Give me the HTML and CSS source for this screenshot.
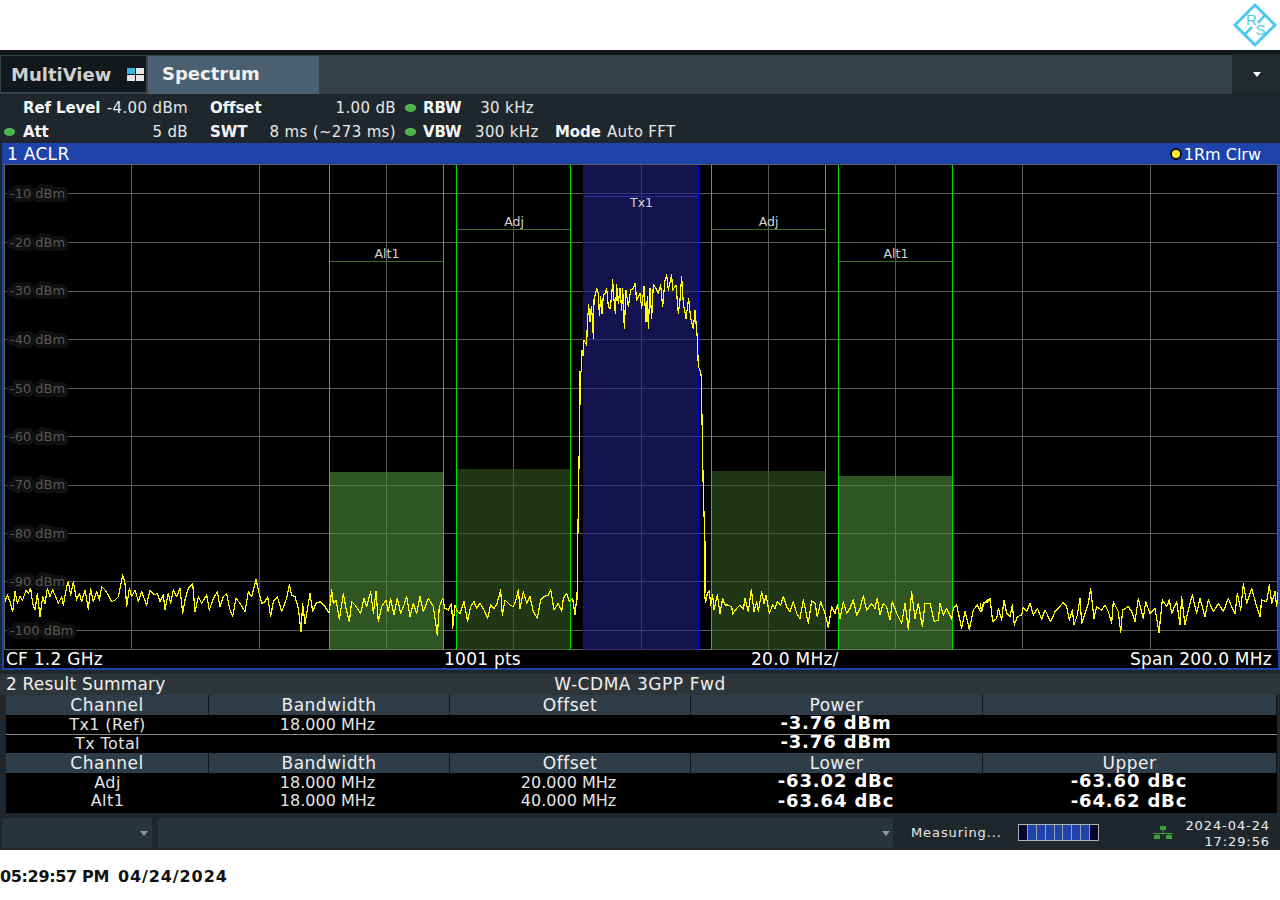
FILE: index.html
```html
<!DOCTYPE html>
<html lang="en">
<head>
<meta charset="utf-8">
<title>R&amp;S Spectrum ACLR</title>
<link rel="stylesheet" href="styles.css">
</head>
<body>
<header class="page-head">
  <svg class="logo" viewBox="0 0 46 46" width="46" height="46" aria-label="R&amp;S">
    <path class="logo-line" d="M23 3 L43 23 L23 43 L3 23 Z"/>
    <path class="logo-line thin" d="M34 12 L26 21 M20 25 L12 33"/>
    <text class="logo-text" x="14" y="23">R</text>
    <text class="logo-text" x="23.500" y="33">S</text>
  </svg>
</header>

<main class="instrument">
  <div class="top-strip"></div>
  <nav class="tabbar">
    <div class="tab tab-multi">
      <span>MultiView</span>
      <span class="mv-icon"><i class="on"></i><i></i><i></i><i></i></span>
    </div>
    <div class="tab tab-spectrum">Spectrum</div>
    <div class="tab-fill"></div>
    <div class="tab-menu"><span class="tri-white"></span></div>
  </nav>

  <section class="info">
    <span class="c-dot"></span>
    <b class="c-l1">Ref Level</b><span class="c-v1">-4.00 dBm</span>
    <b class="c-l2">Offset</b><span class="c-v2">1.00 dB</span>
    <span class="c-dot2"><i class="led"></i></span>
    <b class="c-l3">RBW</b><span class="c-v3">30 kHz</span>
    <span></span><span></span>

    <span class="c-dot"><i class="led"></i></span>
    <b class="c-l1">Att</b><span class="c-v1">5 dB</span>
    <b class="c-l2">SWT</b><span class="c-v2">8 ms (~273 ms)</span>
    <span class="c-dot2"><i class="led"></i></span>
    <b class="c-l3">VBW</b><span class="c-v3">300 kHz</span>
    <b class="c-l4">Mode</b><span class="c-v4">Auto FFT</span>
  </section>

  <section class="window">
    <div class="win-title">
      <span>1 ACLR</span>
      <span class="trace-tag"><i class="marker"></i>1Rm Clrw</span>
    </div>
    <svg class="plot" viewBox="4 164 1274 486" width="1274" height="486">
      <rect class="bg" x="4" y="164" width="1274" height="486"/>
      <g class="grid">
        <path d="M131.5 164V650M259.5 164V650M386.5 164V650M513.5 164V650M641.5 164V650M768.5 164V650M895.5 164V650M1022.5 164V650M1150.5 164V650M1277.5 164V650M4.5 164V650"/>
        <path d="M4 164.5H1278M4 193.5H1278M4 242.5H1278M4 291.5H1278M4 339.5H1278M4 388.5H1278M4 436.5H1278M4 485.5H1278M4 533.5H1278M4 581.5H1278M4 630.5H1278M4 649.5H1278"/>
      </g>
      <g class="ylabels">
        <text x="10" y="198">-10 dBm</text>
        <text x="10" y="247">-20 dBm</text>
        <text x="10" y="295">-30 dBm</text>
        <text x="10" y="344">-40 dBm</text>
        <text x="10" y="393">-50 dBm</text>
        <text x="10" y="441">-60 dBm</text>
        <text x="10" y="489">-70 dBm</text>
        <text x="10" y="538">-80 dBm</text>
        <text x="10" y="586">-90 dBm</text>
        <text x="10" y="635">-100 dBm</text>
      </g>
      <rect class="fill-tx" x="583" y="165" width="116" height="485"/>
      <rect class="fill-alt" x="329" y="472" width="114" height="178"/>
      <rect class="fill-adj" x="456" y="469" width="114" height="181"/>
      <rect class="fill-adj" x="711" y="471" width="114" height="179"/>
      <rect class="fill-alt" x="838" y="476" width="114" height="174"/>
      <path class="edge-blue" d="M583.5 165V650M698.5 165V650"/>
      <path class="edge-green" d="M329.5 165V650M443.5 165V650M456.5 165V650M570.5 165V650M711.5 165V650M825.5 165V650M838.5 165V650M952.5 165V650"/>
      <path class="bar-green" d="M330 261.5H443M457 229.5H570M712 229.5H825M839 261.5H952"/>
      <path class="bar-blue" d="M584 196.5H698"/>
      <g class="chlabels">
        <text x="387" y="258">Alt1</text>
        <text x="514" y="226">Adj</text>
        <text x="641.500" y="207">Tx1</text>
        <text x="768.500" y="226">Adj</text>
        <text x="896" y="258">Alt1</text>
      </g>
      <g transform="translate(0 560) scale(.33333)">
        <polyline class="trace" points="15,125 22,105 30,125 38,155 45,95 52,130 60,110 68,120 78,90 85,100 92,85 98,130 105,150 112,100 120,170 128,110 135,130 142,85 150,110 158,90 165,105 175,130 185,110 190,135 200,80 205,65 212,105 220,65 230,120 238,100 245,125 255,90 265,148 272,85 280,125 290,95 298,120 305,80 315,90 322,100 335,125 345,120 355,110 368,45 375,70 380,140 388,85 395,110 405,90 415,125 425,95 440,135 450,90 462,105 472,100 480,125 490,105 495,150 505,100 512,130 520,90 530,110 540,85 548,160 555,120 565,85 578,70 585,155 595,110 605,130 620,105 628,150 640,115 652,95 660,140 670,110 680,100 690,150 698,170 708,115 720,130 735,155 745,95 755,110 768,58 776,95 785,130 795,125 803,110 812,170 820,125 832,110 845,155 860,115 868,75 875,105 885,110 895,145 903,215 908,130 915,190 930,100 938,155 948,130 960,125 975,140 988,160"/>
      </g>
      <g transform="translate(300 570) scale(.33333)">
        <polyline class="trace" points="88,125 95,60 100,100 108,90 118,148 130,72 140,125 148,155 155,95 165,105 182,130 192,85 200,110 212,65 220,130 228,65 235,155 245,110 258,90 265,125 272,85 282,135 292,85 302,130 312,105 320,80 330,140 340,100 350,130 360,80 370,125 385,85 400,110 412,195 418,110 428,85 435,115 445,120 455,100 458,175 465,105 472,125 480,130 492,95 503,155 512,110 522,95 530,115 540,100 552,120 563,145 572,105 582,115 590,105 602,60 607,135 615,90 630,105 640,110 648,90 655,60 660,115 670,65 680,100 690,80 700,125 712,145 722,90 732,80 745,75 752,58 762,120 775,100 785,125 790,85 800,70 808,95 818,85 825,135 830,85"/>
      </g>
      <g transform="translate(570 260) scale(.33333)">
        <polyline class="trace" points="21,1020 24,800 30,420 30,335 35,335 36,270 40,285 42,240 50,255 52,190 56,135 60,185 64,140 68,185 70,235 72,120 80,85 85,100 88,165 92,110 96,160 100,105 105,100 110,85 115,140 120,145 125,110 128,60 132,120 136,160 140,75 145,130 150,85 155,150 158,85 163,205 168,90 175,140 182,90 190,85 195,70 200,120 210,100 215,145 222,80 228,185 232,110 235,205 240,85 245,175 250,75 258,85 265,100 272,75 278,140 285,60 290,45 295,90 305,45 308,90 318,75 325,160 330,120 335,50 340,130 348,175 356,115 362,175 370,205 375,150 382,235 385,320 390,330 395,355 395,420 400,700 405,850 405,1000"/>
      </g>
      <g transform="translate(690 570) scale(.33333)">
        <polyline class="trace" points="43,0 43,68 47,98 52,70 58,62 62,105 68,75 72,120 82,75 90,130 98,85 105,105 112,105 125,110 128,132 140,115 150,105 160,118 165,85 175,125 184,58 192,125 200,95 205,125 215,65 222,100 228,75 238,130 248,105 255,115 262,95 272,105 280,80 290,110 300,125 310,95 320,130 330,145 340,90 355,160 365,92 375,100 382,140 392,95 405,130 415,172 425,110 435,130 442,105 450,145 460,95 470,130 480,115 490,90 500,135 510,115 520,78 530,120 545,100 555,115 562,85 570,135 580,100 590,110 600,150 607,95 620,130 635,160 645,100 655,178 665,65 675,145 685,100 697,170 705,100 720,100 733,155 745,150 750,100 760,135 770,115 785,148 790,115 800,105 815,175 825,125 838,178 850,120 862,105 872,125 880,100 900,85"/>
      </g>
      <g transform="translate(980 570) scale(.33333)">
        <polyline class="trace" points="0,98 5,125 12,100 25,95 30,85 38,155 50,145 55,115 65,150 72,90 80,130 90,140 97,105 103,165 112,140 125,135 130,112 140,125 150,100 160,135 172,115 185,148 195,120 212,155 225,125 235,115 250,97 260,110 268,150 277,120 282,165 292,135 300,85 305,160 315,130 325,100 332,57 342,145 350,110 365,120 375,105 385,125 395,160 400,95 415,125 422,187 428,120 445,110 455,125 465,155 475,85 490,145 497,95 510,130 525,115 537,187 547,90 560,110 568,90 575,130 590,95 600,165 605,80 615,165 625,120 637,75 650,130 660,85 675,140 685,90 700,125 715,100 730,125 745,85 755,110 765,130 772,70 782,120 790,42 800,100 815,55 830,110 840,140 845,90 860,95 868,45 875,100 885,65 890,110 895,60"/>
      </g>
    </svg>
    <div class="plot-foot">
      <span>CF 1.2 GHz</span>
      <span>1001 pts</span>
      <span>20.0 MHz/</span>
      <span>Span 200.0 MHz</span>
    </div>
  </section>

  <section class="summary">
    <div class="sum-title">
      <span class="sum-name">2 Result Summary</span>
      <span class="sum-std">W-CDMA 3GPP Fwd</span>
    </div>
    <table class="results">
      <colgroup><col class="w1"><col class="w2"><col class="w2"><col class="w3"><col class="w4"></colgroup>
      <tr class="h20"><th>Channel</th><th>Bandwidth</th><th>Offset</th><th>Power</th><th></th></tr>
      <tr class="h19 ruled"><td>Tx1 (Ref)</td><td class="num">18.000 MHz</td><td></td><td class="val">-3.76 dBm</td><td></td></tr>
      <tr class="h18"><td>Tx Total</td><td></td><td></td><td class="val">-3.76 dBm</td><td></td></tr>
      <tr class="h20"><th>Channel</th><th>Bandwidth</th><th>Offset</th><th>Lower</th><th>Upper</th></tr>
      <tr class="h19"><td>Adj</td><td class="num">18.000 MHz</td><td class="num">20.000 MHz</td><td class="val">-63.02 dBc</td><td class="val">-63.60 dBc</td></tr>
      <tr class="h21"><td>Alt1</td><td class="num">18.000 MHz</td><td class="num">40.000 MHz</td><td class="val">-63.64 dBc</td><td class="val">-64.62 dBc</td></tr>
    </table>
  </section>

  <footer class="statusbar">
    <div class="drop drop-a"><span class="tri-gray"></span></div>
    <div class="drop drop-b"><span class="tri-gray"></span></div>
    <div class="measuring">Measuring...</div>
    <div class="progress"><i class="off"></i><i></i><i></i><i></i><i></i><i></i><i></i><i></i><i class="off"></i></div>
    <svg class="net" viewBox="0 0 20 14" width="20" height="14" aria-hidden="true">
      <rect x="7" y="0" width="6" height="4"/>
      <rect x="1" y="9" width="6" height="4"/>
      <rect x="13" y="9" width="6" height="4"/>
      <path d="M10 4V9M0 7.500H20M4 7V9M16 7V9"/>
    </svg>
    <div class="clock"><span>2024-04-24</span><span>17:29:56</span></div>
  </footer>
</main>

<p class="stamp"><span class="time">05:29:57 PM</span><span class="date">04/24/2024</span></p>
</body>
</html>
```

FILE: styles.css
```css
* { box-sizing: border-box; }
html, body { margin: 0; padding: 0; }
body { background: #fff; font-family: "DejaVu Sans", sans-serif; color: #fff; width: 1280px; }

.page-head { height: 50px; display: flex; justify-content: flex-end; align-items: flex-start; padding: 2px 2px 0 0; }
.logo-line { fill: none; stroke: #4cc9ec; stroke-width: 3; }
.logo-line.thin { stroke-width: 2.5; }
.logo-text { font-family: "Liberation Sans", sans-serif; font-size: 15px; fill: #4cc9ec; }

.instrument { height: 800px; background: #1f272d; display: flex; flex-direction: column; }
.top-strip { height: 5px; background: #111819; }

.tabbar { height: 39px; display: flex; background: #36424a; }
.tab { display: flex; align-items: center; font-weight: bold; font-size: 18px; }
.tab-multi { width: 145px; margin: 1px 2px 2px 1px; background: #12181b; color: #cfcfcf; padding-left: 10px; gap: 16px; }
.tab-spectrum { width: 171px; background: #4a5f70; color: #f0f0f0; padding-left: 14px; margin-top: 1px; padding-bottom: 3px; }
.tab-fill { flex: 1; }
.tab-menu { width: 48px; margin-top: -1px; background: #232a2e; display: flex; align-items: center; justify-content: center; }
.tri-white { width: 0; height: 0; border: 4px solid transparent; border-top: 5px solid #fff; border-bottom: 0; margin-left: 2px; }
.mv-icon { display: grid; grid-template-columns: 8px 8px; grid-template-rows: 6px 6px; gap: 1px; }
.mv-icon i { background: #e6e6e6; }
.mv-icon i.on { background: #3cb4e0; }

.info {
  height: 49px; padding: 2px 0 0 4px; display: grid; font-size: 15px; color: #e8e8e8; white-space: nowrap;
  grid-template-columns: 19px 82px 105px 55px 131px 27px 52px 80px 52px 1fr;
  grid-auto-rows: 24px; align-items: center;
}
.info span { letter-spacing: .35px; }
.info b { color: #f4f4f4; font-weight: bold; letter-spacing: -.1px; }
.c-v1 { text-align: right; padding-right: 22px; }
.c-v3 { text-align: right; padding-right: 21px; }
.c-v2 { text-align: right; }
.c-dot2 { display: flex; justify-content: center; padding-left: 2px; }
.led { display: block; width: 11px; height: 8px; border-radius: 50%; background: radial-gradient(ellipse at 50% 70%, #46b44a 45%, #8ccf8f 100%); }

.window { margin-left: 2px; height: 527px; border: solid #1e44ac; border-width: 0 2px 2px; display: flex; flex-direction: column; background: #000; flex: none; }
.win-title { height: 21px; margin-right: -2px; background: #1e44ac; display: flex; justify-content: space-between; align-items: center; font-size: 17px; letter-spacing: .3px; padding: 1px 19px 0 3px; color: #fff; }
.trace-tag { display: flex; align-items: center; gap: 2px; font-size: 16px; letter-spacing: 0; }
.marker { width: 12px; height: 12px; border-radius: 50%; background: #ffee33; border: 2px solid #101010; }

.plot { display: block; flex: none; }
.bg { fill: #000; }
.grid path { stroke: #5c5c5c; stroke-width: 1; fill: none; shape-rendering: crispEdges; }
.ylabels text { font-size: 13px; fill: #585858; paint-order: stroke; stroke: #101010; stroke-width: 8px; stroke-linejoin: round; }
.fill-tx { fill: #211e84; opacity: .6; shape-rendering: crispEdges; }
.fill-alt { fill: #4e8e3a; opacity: .6; shape-rendering: crispEdges; }
.fill-adj { fill: #345c23; opacity: .6; shape-rendering: crispEdges; }
.edge-blue { stroke: #0000e6; fill: none; shape-rendering: crispEdges; }
.edge-green { stroke: #00e000; fill: none; shape-rendering: crispEdges; }
.bar-green { stroke: #3c6e2c; fill: none; shape-rendering: crispEdges; }
.bar-blue { stroke: #2c2ca8; fill: none; shape-rendering: crispEdges; }
.chlabels text { font-size: 12.500px; fill: #d4d4d4; text-anchor: middle; }
.trace { fill: none; stroke: #ffff00; stroke-width: 1.200px; vector-effect: non-scaling-stroke; shape-rendering: crispEdges; stroke-linejoin: round; }

.plot-foot { height: 18px; display: grid; grid-template-columns: 438px 307px 1fr auto; padding: 0 6px 0 2px; font-size: 17px; letter-spacing: .25px; line-height: 18px; background: #000; color: #fff; }

.summary { height: 143px; padding: 4px 3px 0 6px; flex: none; display: flex; flex-direction: column; }
.sum-title { height: 21px; margin: 0 -3px 0 -6px; padding: 0 0 1px 6px; background: #2e3538; display: grid; grid-template-columns: 1fr auto 1fr; font-size: 17px; letter-spacing: .2px; line-height: 20px; color: #f0f0f0; }
.sum-name { grid-column: 1; }
.sum-std { grid-column: 2; margin-left: -6px; letter-spacing: .55px; }
.results { width: 1271px; border-collapse: separate; border-spacing: 0; table-layout: fixed; background: #000; font-size: 16px; color: #e4e4e4; }
.w1 { width: 203px; } .w2 { width: 241px; } .w3 { width: 292px; } .w4 { width: 294px; }
.results th, .results td { padding: 0; text-align: center; font-weight: normal; line-height: 16px; }
.results th { background: #2f3d49; border-right: 1px solid #10161a; color: #eee; font-size: 17px; letter-spacing: .5px; }
.results td:first-child { letter-spacing: .4px; }
.results td.num { padding-right: 4px; }
.h20 { height: 20px; } .h19 { height: 19px; } .h18 { height: 18px; } .h21 { height: 21px; }
.ruled td { border-bottom: 1px solid #8a8a8a; height: 20px; }
.results td.val { font-weight: bold; font-size: 18px; letter-spacing: .85px; color: #fff; line-height: 14px; padding: 0 2px 4px 0; }
.results .h21 td { vertical-align: top; padding-top: 1px; }
.results .h21 td.val { padding: 2px 2px 0 0; }

.statusbar { height: 37px; display: flex; align-items: flex-start; padding-top: 5px; flex: none; }
.statusbar > * { flex: none; }
.drop { height: 30px; background: #28343c; display: flex; justify-content: flex-end; align-items: center; }
.drop-a { width: 150px; margin-left: 2px; padding-right: 4px; }
.drop-b { width: 735px; margin-left: 6px; padding-right: 3px; }
.tri-gray { width: 0; height: 0; border: 4px solid transparent; border-top: 5px solid #8d979e; border-bottom: 0; margin-top: 1px; }
.measuring { width: 107px; margin-left: 18px; font-size: 13px; letter-spacing: .9px; line-height: 29px; color: #e8e8e8; }
.progress { width: 81px; height: 17px; margin-top: 6px; border: 1px solid #b0b0b0; display: flex; gap: 1px; background: #9aa0ac; }
.progress i { flex: 1; background: #1e44ac; }
.progress i.off { background: #06062e; }
.net { margin: 8px 0 0 54px; }
.net rect { fill: #38a038; }
.net path { stroke: #38a038; fill: none; }
.clock { width: 97px; display: flex; flex-direction: column; align-items: flex-end; font-size: 13px; line-height: 16px; letter-spacing: .9px; color: #eee; }

.stamp { margin: 17px 0 0; display: flex; gap: 9px; font-size: 16px; line-height: 19px; font-weight: bold; color: #111; }
.time { letter-spacing: -.35px; }
.date { letter-spacing: .9px; }
```
